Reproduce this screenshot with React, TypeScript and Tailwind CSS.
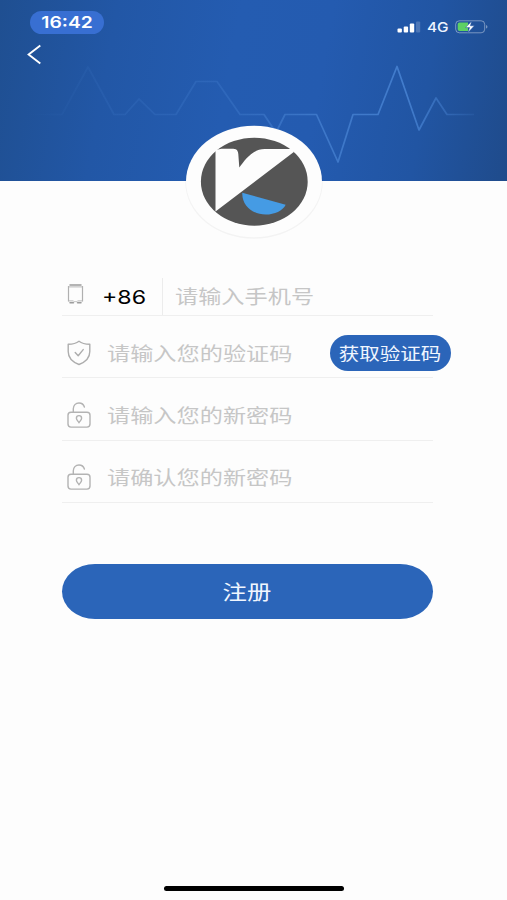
import React, { useState } from 'react';

const CJK = 'font-["Noto_Sans_CJK_SC",sans-serif]';

const PhoneIcon: React.FC = () => (
  <svg width="18" height="22" viewBox="0 0 18 22" fill="none">
    <path d="M1.500 3v15.500M15.500 3v15.500" stroke="#b0b0b0" strokeWidth="1.200" />
    <path d="M3 1.900h11M3 19.700h3.500M10.500 19.700H14" stroke="#9c9c9c" strokeWidth="1.500" strokeLinecap="round" />
    <path d="M1.500 3.900h14M1.500 17.900h5M10.500 17.900h5" stroke="#b8b8b8" strokeWidth="1" />
    <path d="M6.500 18.600h4" stroke="#c8c8c8" strokeWidth="1" />
  </svg>
);

const ShieldIcon: React.FC = () => (
  <svg width="24" height="26" viewBox="0 0 24 26" fill="none" stroke="#adadad" strokeWidth="1.400" strokeLinecap="round" strokeLinejoin="round">
    <path d="M12 1.2C9.3 3.3 5.4 4.2 1.2 4.3v7.2c0 6.5 4 10.4 10.8 13 6.8-2.6 10.8-6.5 10.8-13V4.3C18.600 4.200 14.700 3.300 12 1.200z" />
    <path d="M8.200 12.600l3 3.200 5-6.200" />
  </svg>
);

const LockIcon: React.FC = () => (
  <svg width="24" height="26" viewBox="0 0 24 26" fill="none" stroke="#b3b3b3" strokeWidth="1.400" strokeLinecap="round" strokeLinejoin="round">
    <rect x="1" y="10.200" width="22" height="14.900" rx="3" />
    <path d="M6.300 10V6.800C6.300 3.400 8.600 1 12 1c2.700 0 4.600 1.400 5.400 4" />
    <path d="M12 20.800c-.5-1.500-2.600-2.600-2.600-4.600 0-1.500 1.100-2.600 2.600-2.600s2.600 1.100 2.600 2.600c0 2-2.100 3.100-2.600 4.600z" strokeWidth="1.400" />
  </svg>
);

const Pulse: React.FC = () => (
  <svg className="absolute inset-0" width="507" height="181" viewBox="0 0 507 181" fill="none">
    <defs>
      <linearGradient id="pulse" gradientUnits="userSpaceOnUse" x1="28" y1="0" x2="474" y2="0">
        <stop offset="0" stopColor="#4a86d6" stopOpacity="0" />
        <stop offset="0.2" stopColor="#4a86d6" stopOpacity="0.16" />
        <stop offset="0.45" stopColor="#4a86d6" stopOpacity="0.28" />
        <stop offset="0.65" stopColor="#4a86d6" stopOpacity="0.65" />
        <stop offset="0.85" stopColor="#4a86d6" stopOpacity="0.8" />
        <stop offset="1" stopColor="#4a86d6" stopOpacity="0.15" />
      </linearGradient>
    </defs>
    <path
      d="M28 114.500H62L88 67l26 47.500h11L139 99l16 15.500h21L196 81.500h21l23 33h24l12 18 9-18h31.500L338 162l15-47.500h25L397 66.500l22 63.500 17-32 11 16.500h27"
      stroke="url(#pulse)"
      strokeWidth="1.700"
      strokeLinejoin="round"
    />
  </svg>
);

const Logo: React.FC = () => (
  <svg className="absolute left-[180px] top-[120px]" width="148" height="126" viewBox="180 120 148 126">
    <ellipse cx="254" cy="182.500" rx="68.700" ry="56.200" fill="#000" opacity="0.04" />
    <ellipse cx="254" cy="181.500" rx="68" ry="55.700" fill="#fdfdfd" />
    <ellipse cx="254.300" cy="181.700" rx="53.400" ry="44" fill="#555" />
    <path
      d="M215.500 211.500V150l6-1.200h10c5 0 6.300 1.200 6.800 5.200l1 13.500c6-8 13.500-18.500 25.500-18.500h28l1 3z"
      fill="#fdfdfd"
    />
    <path d="M242.300 192.700l43.400 12c-3 6-11 9.800-20 9.800-13 0-24-9-23.400-21.800z" fill="#459be4" />
  </svg>
);

const StatusIcons: React.FC = () => (
  <div className="flex items-center pt-[8px]">
    <svg width="24" height="12" viewBox="0 0 24 12" fill="#fff">
      <rect x="0.500" y="7.500" width="4.400" height="4" rx="1" />
      <rect x="6.700" y="5.500" width="4.400" height="6" rx="1" />
      <rect x="12.800" y="2.500" width="4.400" height="9" rx="1" />
      <rect x="19" y="0.500" width="4.200" height="11" rx="1" opacity="0.2" />
    </svg>
    <div className="ml-1.5 w-[22px]">
      <span className="block w-max origin-left scale-x-[1.14] font-[Inter] text-[13.500px] leading-4 font-medium text-[#eef4ff]">4G</span>
    </div>
    <svg className="ml-[6px]" width="34" height="14" viewBox="0 0 34 14">
      <rect x="0.700" y="0.800" width="29" height="12" rx="3.600" fill="none" stroke="#fff" strokeOpacity="0.4" />
      <path d="M31.200 5v3.600c1.600-.4 1.600-3.200 0-3.600z" fill="#fff" opacity="0.5" />
      <path d="M4.500 2.500H13v8.600H4.500a1.800 1.800 0 0 1-1.800-1.800V4.300a1.800 1.800 0 0 1 1.800-1.800z" fill="#5ed164" />
      <path d="M16.600 1.200L10.600 7.600h4l-1.600 5 6.400-6.800h-4z" fill="#fff" stroke="#2457a3" strokeWidth="0.500" />
    </svg>
  </div>
);

interface FieldProps {
  icon: React.ReactNode;
  placeholder: string;
  action?: React.ReactNode;
}

const Placeholder: React.FC<{ text: string }> = ({ text }) => (
  <span className={`block w-max origin-left scale-x-[1.220] text-[19px] leading-6 font-normal text-[#c6c6c6] ${CJK}`}>
    {text}
  </span>
);

const Field: React.FC<FieldProps> = ({ icon, placeholder, action }) => (
  <div className="flex h-[62.300px] items-center border-b border-[#efefef] pt-[12px]">
    <div className="ml-[5px] w-[40px] shrink-0">{icon}</div>
    <div className="flex-1">
      <Placeholder text={placeholder} />
    </div>
    {action}
  </div>
);

const App: React.FC = () => {
  const [countryCode] = useState('+86');

  return (
    <div className="flex h-[900px] w-[507px] flex-col overflow-hidden bg-[#fdfdfd]">
      <header className="relative h-[181px] shrink-0 bg-[linear-gradient(100deg,#1f4f91_0%,#2257a6_22%,#245cb1_45%,#245bb0_62%,#2155a3_82%,#1f4b8b_100%)]">
        <Pulse />
        <Logo />
        <div className="relative flex justify-between pt-[11px] pr-[18px] pl-[30px]">
          <div className="flex h-[23px] w-[74px] items-center justify-center rounded-full bg-[#386fd2]">
            <span className="scale-x-[1.220] font-[Inter] text-[15.800px] leading-5 font-semibold text-white">16:42</span>
          </div>
          <StatusIcons />
        </div>
        <svg className="relative mt-[9px] ml-[26px]" width="16" height="22" viewBox="0 0 16 22" fill="none" stroke="#fff" strokeWidth="1.900">
          <path d="M14.300 1.500L2.600 10.600l11.700 9" />
        </svg>
      </header>

      <main className="flex flex-col pt-[73px] pr-[74px] pl-[62px]">
        <div className="flex h-[62px] items-end border-b border-[#efefef]">
          <div className="mb-[10px] ml-[5px] w-[35px]">
            <PhoneIcon />
          </div>
          <div className="mb-[5px] w-[60px]">
            <span className="block w-max origin-left scale-x-[1.220] font-[Inter] text-[19px] leading-6 text-black">{countryCode}</span>
          </div>
          <div className="flex h-[37px] items-center border-l border-[#ececec] pb-[2px] pl-[12px]">
            <Placeholder text="请输入手机号" />
          </div>
        </div>
        <Field
          icon={<ShieldIcon />}
          placeholder="请输入您的验证码"
          action={
            <button className="-mr-[17.500px] flex h-[36px] w-[121px] shrink-0 items-center justify-center rounded-full bg-[#2b65b9]">
              <span className={`scale-x-[1.220] text-[16.800px] leading-6 whitespace-nowrap text-[#f0f6ff] ${CJK}`}>获取验证码</span>
            </button>
          }
        />
        <Field icon={<LockIcon />} placeholder="请输入您的新密码" />
        <Field icon={<LockIcon />} placeholder="请确认您的新密码" />
        <button className="mt-[61px] flex h-[55px] items-center justify-center rounded-[33px/27.500px] bg-[#2b65b9] pr-[2px]">
          <span className={`scale-x-[1.220] pt-px text-[20px] leading-7 text-[#f0f6ff] ${CJK}`}>注册</span>
        </button>
      </main>

      <div className="mt-auto mb-[9px] ml-[164px] h-[5.500px] w-[180px] rounded-full bg-black" />
    </div>
  );
};

export default App;
